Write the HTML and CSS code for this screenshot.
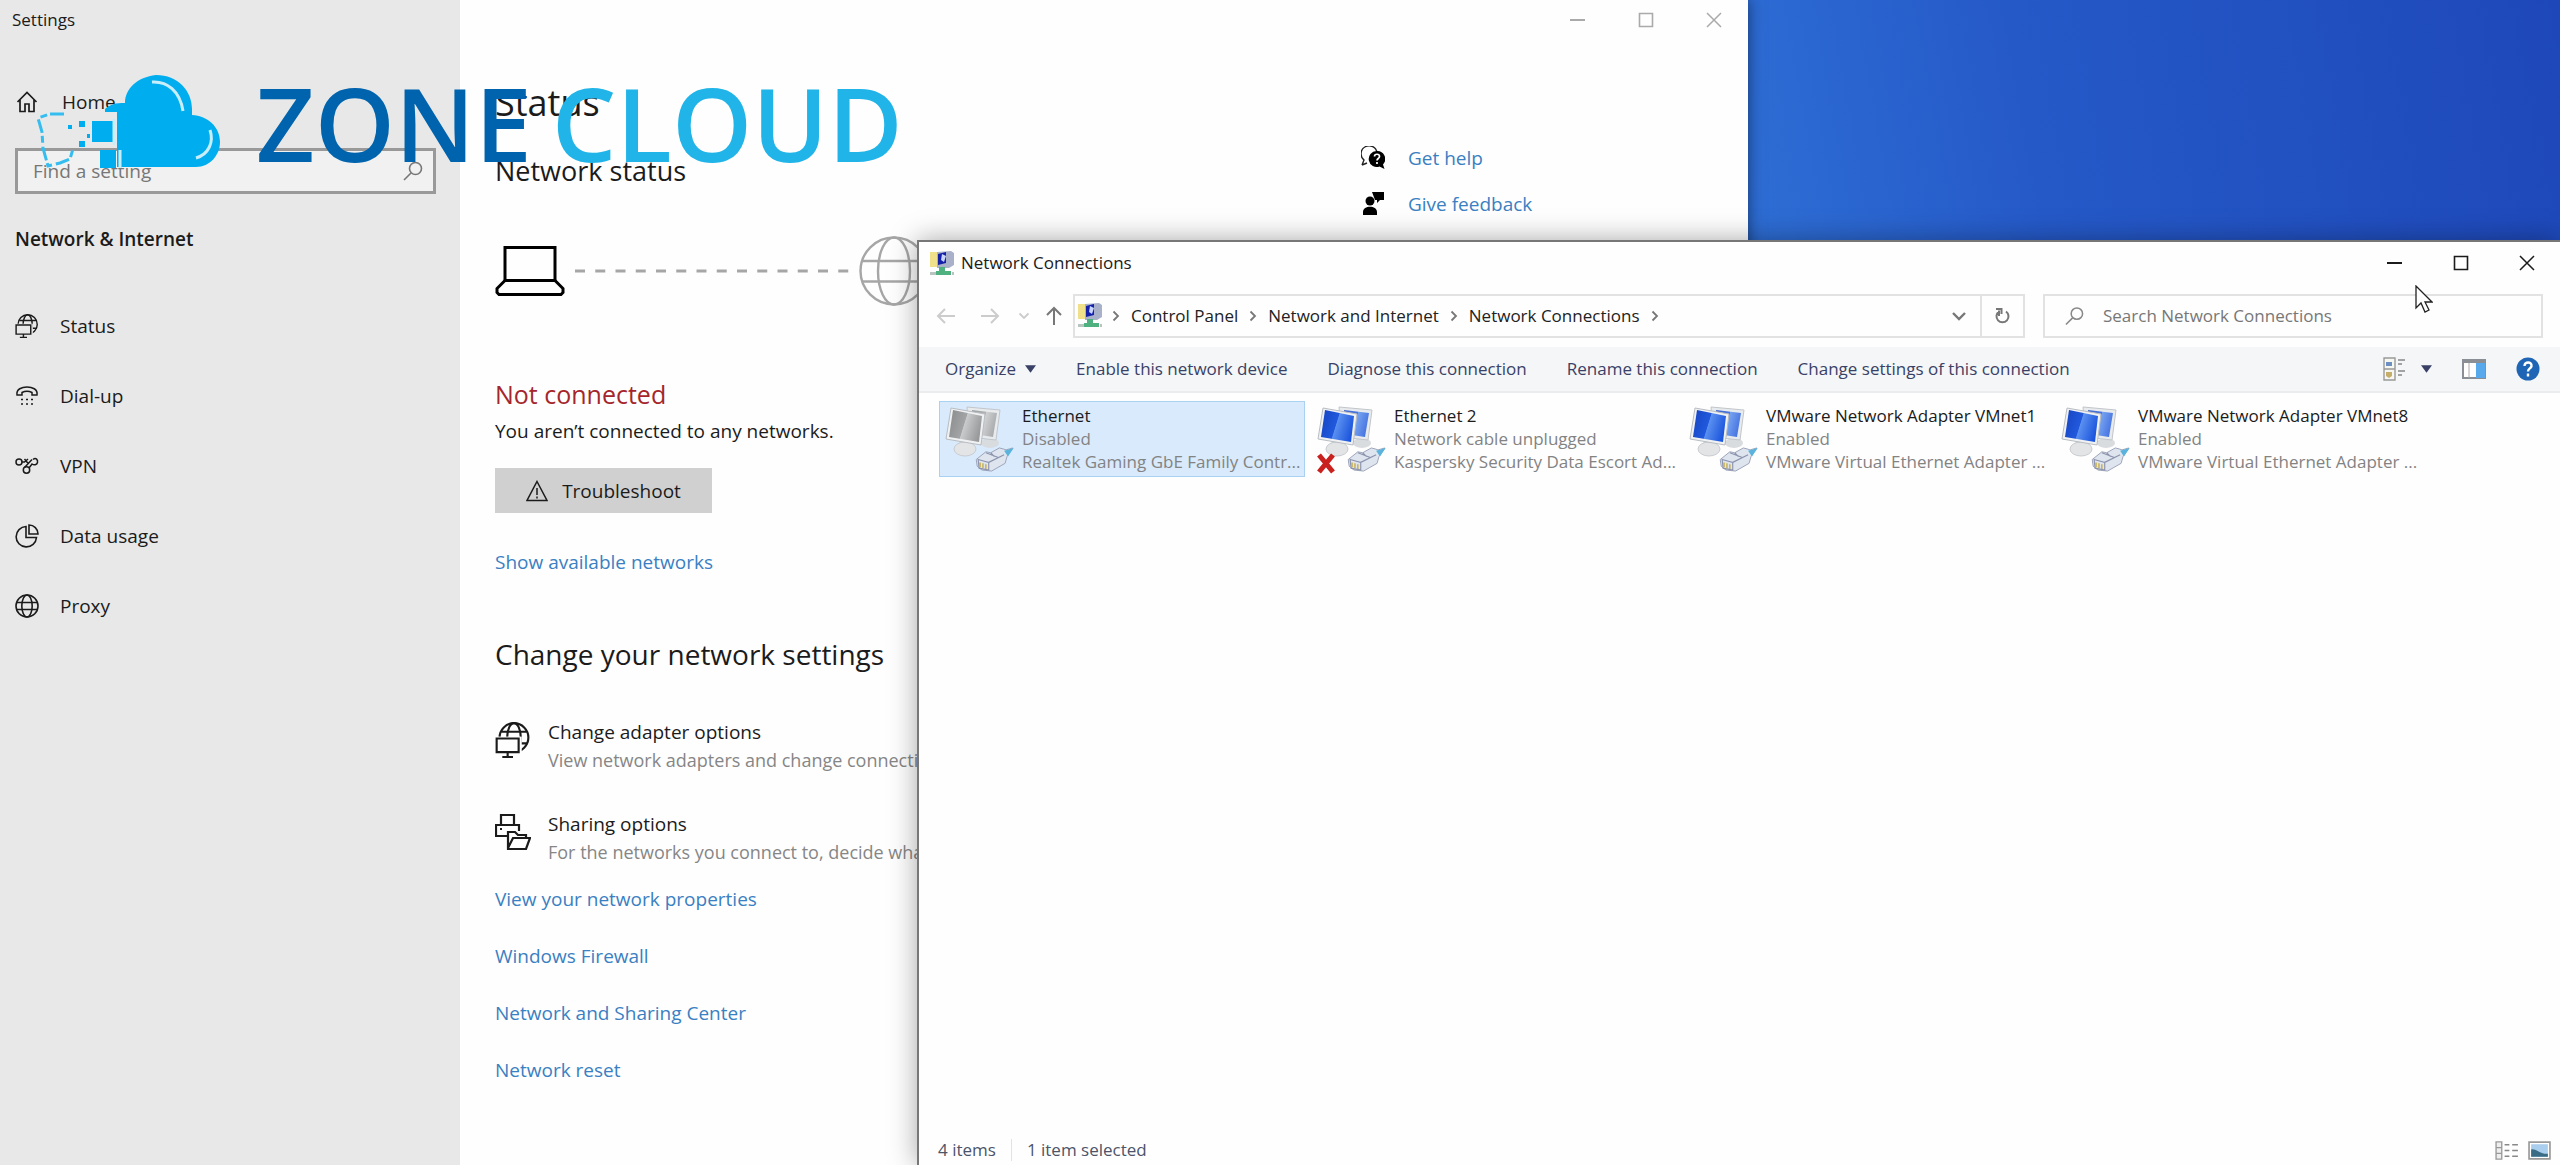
FILE: index.html
```html
<!DOCTYPE html>
<html lang="en">
<head>
<meta charset="utf-8">
<title>Network Connections</title>
<link rel="stylesheet" href="styles.css">
</head>
<body>
<svg class="sprite" aria-hidden="true">
  <defs>
    <linearGradient id="screen-blue" x1="0" y1="0.200" x2="1" y2="0.500">
      <stop offset="0" stop-color="#1746c4"/><stop offset=".48" stop-color="#2159dd"/><stop offset=".5" stop-color="#5a90f0"/><stop offset="1" stop-color="#1c55dd"/>
    </linearGradient>
    <linearGradient id="screen-grey" x1="0" y1="0.200" x2="1" y2="0.500">
      <stop offset="0" stop-color="#8b8d8f"/><stop offset=".48" stop-color="#a2a4a5"/><stop offset=".5" stop-color="#c9cbcc"/><stop offset="1" stop-color="#96989a"/>
    </linearGradient>
  </defs>
  <symbol id="globe" viewBox="0 0 24 24"><g fill="none" stroke="currentColor" stroke-width="1.6"><circle cx="12" cy="12" r="11"/><ellipse cx="12" cy="12" rx="5.2" ry="11"/><path d="M2 8.500h20M2 15.500h20"/></g></symbol>
  <symbol id="globe-pc" viewBox="0 0 36 37"><g fill="none" stroke="currentColor" stroke-width="2.200"><circle cx="19" cy="16" r="14.800"/><ellipse cx="19" cy="16" rx="7" ry="14.800"/><path d="M6 10h26M6 22h27"/></g><path d="M0 15h27v21H0z" fill="var(--bg)"/><path d="M1.200 17h22.600v14H1.200zM12.500 31v5M7 36h11" fill="none" stroke="currentColor" stroke-width="2.200"/></symbol>
  <symbol id="pc-net" viewBox="0 0 24 25"><path d="M0 1h11v15H0z" fill="#f1e08a"/><path d="M7 1l14-1 3 2v12l-5 3H7z" fill="#a9b0c9"/><path d="M8 3l8-2v11l-8 2z" fill="#1420a8"/><path d="M12 3l4 2-2 6-3-2z" fill="#c9d4ff"/><path d="M12 16h3v4h6v4H6v-4h3v-4z" fill="#4fb080"/><path d="M0 21h6v3H0zM22 21h2v3h-2z" fill="#b8c4c0"/></symbol>
  <symbol id="win-min" viewBox="0 0 16 16"><path d="M0 8h15" stroke="currentColor" stroke-width="2"/></symbol>
  <symbol id="win-max" viewBox="0 0 16 16"><path d="M1.500 1.500h13v13h-13z" fill="none" stroke="currentColor" stroke-width="1.600"/></symbol>
  <symbol id="win-close" viewBox="0 0 16 16"><path d="M1 1l14 14M15 1L1 15" stroke="currentColor" stroke-width="1.500"/></symbol>
  <symbol id="search" viewBox="0 0 20 20"><g fill="none" stroke="currentColor" stroke-width="1.600"><circle cx="12.500" cy="7.500" r="6"/><path d="M8 12l-7 7"/></g></symbol>
  <symbol id="arrow" viewBox="0 0 20 18"><path d="M19 9H2M9 2L2 9l7 7" fill="none" stroke="currentColor" stroke-width="2"/></symbol>
  <symbol id="chevron" viewBox="0 0 8 12"><path d="M1.500 1.500L6 6l-4.500 4.500" fill="none" stroke="currentColor" stroke-width="1.800"/></symbol>
  <symbol id="caret" viewBox="0 0 12 8"><path d="M0 0h12L6 8z" fill="currentColor"/></symbol>
  <symbol id="plug" viewBox="0 0 40 26"><path d="M1 13l10-8 5 1 9-5 4 1 3 1 7-2-6 9-2 7-14 8-10-1-5-4z" fill="#dfe5ef" stroke="#9aa2b8"/><path d="M30 4l10-3-6 9z" fill="#59b3dc"/><path d="M3 13l11 3v8l-10-2zM14 16l16-8M16 6l4 4M11 6l13 5" fill="none" stroke="#8c93ad" stroke-width="1.200"/><path d="M5 16v5M8 17v5M11 18v5" stroke="#c6ae4e" stroke-width="1.500"/></symbol>
  <symbol id="monitors" viewBox="0 0 72 70">
    <ellipse cx="46" cy="39" rx="9" ry="5" fill="#d9dcdf"/>
    <path d="M23 3l33 3-4 30-27-3z" fill="#e8ebee" stroke="#c2c6ca"/><path d="M28 6l25 3-4 24-20-3z" fill="var(--screen)" opacity=".8"/>
    <path d="M16 35h10l1 8H15z" fill="#c9cdd1"/><ellipse cx="21" cy="45" rx="11" ry="7" fill="#e2e4e6" stroke="#c9ccd0"/>
    <path d="M7 4l34 6-4 31-35-6z" fill="#eff1f3" stroke="#b9bdc2"/><path d="M9 6l29 6-3 26-30-5z" fill="var(--screen)"/>
    <use href="#plug" x="31" y="43" width="39" height="25"/>
  </symbol>
</svg>

<div class="desktop">
  <section class="settings" aria-label="Settings">
    <aside class="sidebar">
      <div class="app-title">Settings</div>
      <a class="home" href="#"><svg viewBox="0 0 22 22"><path d="M1.500 11L11 1.500 20.500 11M4 9v11.500h5V13h4v7.500h5V9" fill="none" stroke="currentColor" stroke-width="1.700"/></svg>Home</a>
      <label class="find"><input type="text" placeholder="Find a setting" aria-label="Find a setting"><svg><use href="#search"/></svg></label>
      <h2 class="side-title">Network &amp; Internet</h2>
      <nav class="side-nav">
        <a href="#"><svg><use href="#globe-pc"/></svg>Status</a>
        <a href="#"><svg viewBox="0 0 24 24"><path d="M2 11C1 5 7 3 12 3s11 2 10 8h-5V8.500c-3-1.500-7-1.500-10 0V11z" fill="none" stroke="currentColor" stroke-width="1.500"/><path d="M6 15.500h2m3 0h2m3 0h2M6 20h2m3 0h2m3 0h2" stroke="currentColor" stroke-width="1.600"/></svg>Dial-up</a>
        <a href="#"><svg viewBox="0 0 24 24"><g fill="none" stroke="currentColor" stroke-width="1.500"><circle cx="4" cy="8" r="3"/><path d="M7 8h2.500l3.500-3M9.500 5l4 5M18 5.500C21 3 23 6 22.500 8.500S19 11.500 17 10L14 14M17 5.500L9.500 13.500"/><circle cx="11.500" cy="16" r="3.200"/></g></svg>VPN</a>
        <a href="#"><svg viewBox="0 0 24 24"><g fill="none" stroke="currentColor" stroke-width="1.600"><path d="M11 2.500a10.200 10.200 0 1 0 10.500 11H11z"/><path d="M14 1v9h9A9 9 0 0 0 14 1z"/></g></svg>Data usage</a>
        <a href="#"><svg><use href="#globe"/></svg>Proxy</a>
      </nav>
    </aside>
    <main class="main">
      <div class="caption pale">
        <button aria-label="Minimize"><svg><use href="#win-min"/></svg></button>
        <button aria-label="Maximize"><svg><use href="#win-max"/></svg></button>
        <button aria-label="Close"><svg><use href="#win-close"/></svg></button>
      </div>
      <div class="columns">
        <div class="content">
          <h1>Status</h1>
          <h2 class="sub">Network status</h2>
          <div class="diagram">
            <svg class="laptop" viewBox="0 0 70 50"><g fill="none" stroke="#000" stroke-width="3"><path d="M10 1.500h50v33H10z"/><path d="M10 34.500L2 42.500v4l2 2h62l2-2v-4l-8-8"/></g></svg>
            <svg class="dashes" viewBox="0 0 274 4"><path d="M0 2h274" stroke="#a6a6a6" stroke-width="3" stroke-dasharray="10 10.250"/></svg>
            <svg class="world" viewBox="0 0 70 70"><g fill="none" stroke="#a6a6a6" stroke-width="2.400"><circle cx="35" cy="35" r="33.500"/><ellipse cx="35" cy="35" rx="16" ry="33.500"/><path d="M3 25h64M3 45.500h64"/></g></svg>
          </div>
          <p class="alert">Not connected</p>
          <p class="body">You aren’t connected to any networks.</p>
          <button class="trouble"><svg viewBox="0 0 22 22"><path d="M11 1.500L21 20.500H1z" fill="none" stroke="currentColor" stroke-width="1.500"/><path d="M11 8v7M11 16.500v2" stroke="currentColor" stroke-width="1.500"/></svg>Troubleshoot</button>
          <a class="body show" href="#">Show available networks</a>
          <h2 class="change">Change your network settings</h2>
          <div class="options">
            <a class="option" href="#"><svg><use href="#globe-pc"/></svg><span><b>Change adapter options</b><small>View network adapters and change connection settings.</small></span></a>
            <a class="option" href="#"><svg viewBox="0 0 36 36"><g fill="none" stroke="currentColor" stroke-width="2.200"><path d="M6 11V1h13v10M12 22H1V11h23v6M5 15h2"/><path d="M13 34V18h7l3 3h8v4M13 34l5-10h17l-4 11H13z"/></g></svg><span><b>Sharing options</b><small>For the networks you connect to, decide what you want to share.</small></span></a>
          </div>
          <nav class="links">
            <a href="#">View your network properties</a>
            <a href="#">Windows Firewall</a>
            <a href="#">Network and Sharing Center</a>
            <a href="#">Network reset</a>
          </nav>
        </div>
        <aside class="help">
          <a href="#"><svg viewBox="0 0 24 24"><path d="M1 19l2-5A8 8 0 1 1 16 7M1 19l5-2" fill="none" stroke="#222" stroke-width="1.400"/><path d="M15.500 5a8 8 0 1 0 3 15.500l5 2.500-1.500-4.500A8 8 0 0 0 15.500 5z" fill="#000"/><path d="M13.500 10.500c0-3 5-3 5 0 0 2-2.500 2-2.500 4M16 16v2" fill="none" stroke="#fff" stroke-width="1.700"/></svg>Get help</a>
          <a href="#"><svg viewBox="0 0 24 24"><circle cx="9" cy="9" r="4.500"/><path d="M2 23v-3c0-7 14-7 14 0v3zM11 0h12v8h-4l-3 3V8h-2z"/></svg>Give feedback</a>
        </aside>
      </div>
    </main>
  </section>

  <section class="explorer" aria-label="Network Connections">
    <header class="ex-title">
      <svg class="app"><use href="#pc-net"/></svg><span>Network Connections</span>
      <div class="caption">
        <button aria-label="Minimize"><svg><use href="#win-min"/></svg></button>
        <button aria-label="Maximize"><svg><use href="#win-max"/></svg></button>
        <button aria-label="Close"><svg><use href="#win-close"/></svg></button>
      </div>
    </header>
    <div class="ex-nav">
      <div class="history">
        <button class="off" aria-label="Back"><svg><use href="#arrow"/></svg></button>
        <button class="off" aria-label="Forward"><svg class="flip"><use href="#arrow"/></svg></button>
        <button class="off small" aria-label="Recent"><svg class="down"><use href="#chevron"/></svg></button>
        <button aria-label="Up"><svg class="up"><use href="#arrow"/></svg></button>
      </div>
      <div class="address">
        <svg class="app"><use href="#pc-net"/></svg>
        <svg class="sep"><use href="#chevron"/></svg><a href="#">Control Panel</a>
        <svg class="sep"><use href="#chevron"/></svg><a href="#">Network and Internet</a>
        <svg class="sep"><use href="#chevron"/></svg><a href="#">Network Connections</a>
        <svg class="sep"><use href="#chevron"/></svg>
        <button class="drop" aria-label="Previous locations"><svg viewBox="0 0 14 10"><path d="M1 2l6 6 6-6" fill="none" stroke="currentColor" stroke-width="2.400"/></svg></button>
        <button class="refresh" aria-label="Refresh"><svg viewBox="0 0 16 18"><path d="M4 4.500a6 6 0 1 0 7 0M4 9V3.500M1 2h5.500v5" fill="none" stroke="currentColor" stroke-width="2"/></svg></button>
      </div>
      <label class="ex-search"><svg><use href="#search"/></svg><input type="text" placeholder="Search Network Connections" aria-label="Search Network Connections"></label>
    </div>
    <div class="toolbar">
      <button>Organize <svg class="caret"><use href="#caret"/></svg></button>
      <button>Enable this network device</button>
      <button>Diagnose this connection</button>
      <button>Rename this connection</button>
      <button>Change settings of this connection</button>
      <div class="tools">
        <button aria-label="Change your view"><svg class="view" viewBox="0 0 22 24"><path d="M1 1h11v22H1zM1 12h11" fill="#f7f7f2" stroke="#999" stroke-width="1.400"/><path d="M3 5h6v4H3z" fill="#6b8fc0"/><path d="M3 15h6v4l-3 2-3-2z" fill="#c6ad6a"/><path d="M15 3h7M15 7h4M15 14h7M15 18h4" stroke="#888" stroke-width="1.600"/></svg><svg class="caret"><use href="#caret"/></svg></button>
        <button aria-label="Preview pane"><svg class="pane" viewBox="0 0 24 20"><path d="M1 1h22v18H1z" fill="#fff" stroke="#8a8f96" stroke-width="2"/><path d="M1 0h22v4H1z" fill="#8a8f96"/><path d="M14 4h9v15h-9z" fill="#58a8ec"/><path d="M7 4v15" stroke="#aaa"/></svg></button>
        <button aria-label="Help"><svg class="ask" viewBox="0 0 24 24"><circle cx="12" cy="12" r="11.500" fill="#1f65b5"/><path d="M8.500 9c0-5 7.500-4.500 7 0-.3 2.500-3.500 2.500-3.500 5.500M12 16.500v3" fill="none" stroke="#fff" stroke-width="2.400"/></svg></button>
      </div>
    </div>
    <ul class="adapters">
      <li class="selected"><svg class="grey"><use href="#monitors"/></svg><span><b>Ethernet</b><span>Disabled</span><span>Realtek Gaming GbE Family Contr...</span></span></li>
      <li><svg><use href="#monitors"/></svg><svg class="cross" viewBox="0 0 20 21"><path d="M3 2l14 17M17 2L3 19" stroke="#c9211e" stroke-width="5"/></svg><span><b>Ethernet 2</b><span>Network cable unplugged</span><span>Kaspersky Security Data Escort Ad...</span></span></li>
      <li><svg><use href="#monitors"/></svg><span><b>VMware Network Adapter VMnet1</b><span>Enabled</span><span>VMware Virtual Ethernet Adapter ...</span></span></li>
      <li><svg><use href="#monitors"/></svg><span><b>VMware Network Adapter VMnet8</b><span>Enabled</span><span>VMware Virtual Ethernet Adapter ...</span></span></li>
    </ul>
    <footer class="status">
      <span>4 items</span><i></i><span>1 item selected</span>
      <div class="modes">
        <button aria-label="Details"><svg viewBox="0 0 24 20"><path d="M1 1h6v18H1zM1 7h6M1 13h6" fill="#eee" stroke="#999" stroke-width="1.400"/><path d="M10 4h5M18 4h6M10 10h5M18 10h6M10 16h5M18 16h6" stroke="#888" stroke-width="1.600"/></svg></button>
        <button aria-label="Large icons"><svg viewBox="0 0 22 18"><path d="M1 1h20v16H1z" fill="#fff" stroke="#999" stroke-width="1.600"/><path d="M3 3h16v12H3z" fill="#a9cdec"/><path d="M3 8c6-1 8 5 16 4v3H3z" fill="#3a6c86"/></svg></button>
      </div>
    </footer>
  </section>

  <div class="brand">
    <svg viewBox="0 0 190 96" fill="#00aeef">
      <path d="M71 35c6-5 10-6 20-6 0-14 12-26 31-28 22 0 36 16 36 34v6c16 1 28 12 28 27 0 13-10 25-24 25H83V38H71z"/>
      <path d="M118 8c15-1 28 9 31 29M176 56c4 12-1 24-14 28" fill="none" stroke="#c9eefb" stroke-width="3"/>
      <path d="M58 47h21v21H58zM66 76h16v18H66zM34 51h4v4h-4zM45 47h6v6h-6zM45 67h6v6h-6zM53 60h3v4h-3z"/>
      <path d="M30 40h-14l-12 4 4 14 1 16 5 18 12-3 10-4 3-10" fill="none" stroke="#35bdf0" stroke-width="3" stroke-dasharray="14 3 7 4"/>
      <path d="M80 45v26M86 76v18" stroke="#c9eefb" stroke-width="3"/>
    </svg>
    <span class="zone">ZONE</span><span class="cloud">CLOUD</span>
  </div>
  <svg class="cursor" viewBox="0 0 18 28"><path d="M1 1v22l5-5 4 9 4-2-4-8h7z" fill="#fff" stroke="#222" stroke-width="1.300"/></svg>
</div>
</body>
</html>
```
FILE: styles.css
```css
* { box-sizing: border-box; }
body { margin: 0; font-family: "Open Sans", "Noto Sans", sans-serif; font-size: 19px; line-height: 28px; color: #1b1b1b; }
h1, h2, p, ul { margin: 0; padding: 0; font-weight: 400; }
b, small { display: block; font-size: inherit; font-weight: 400; }
a { color: inherit; text-decoration: none; }
button { border: 0; padding: 0; background: none; font: inherit; color: inherit; }
input { border: 0; padding: 0; outline: 0; background: none; font: inherit; color: inherit; min-width: 0; flex: 1; }
svg { flex: none; display: block; }
.sprite { position: absolute; width: 0; height: 0; }

.desktop { position: relative; min-height: 100vh; overflow: hidden; background: linear-gradient(80deg, #2f70d6 68%, #2559c8 80%, #1e48ba 100%); }

/* Settings window */
.settings { position: absolute; inset: 0 auto 0 0; width: 1748px; display: flex; background: #fefefe; box-shadow: 0 0 14px rgba(0, 0, 0, .5); --bg: #fefefe; }
.sidebar { width: 460px; flex: none; background: #e8e8e8; --bg: #e8e8e8; }
.app-title { padding: 6px 12px; font-size: 17px; }
.home { display: flex; align-items: center; gap: 24px; height: 44px; margin-top: 40px; padding-left: 16px; }
.home svg { width: 22px; height: 22px; }
.find { display: flex; align-items: center; height: 46px; margin: 24px 24px 0 15px; padding: 0 10px 0 15px; border: 3px solid #999; background: #f1f1f1; color: #777; }
.find svg { width: 20px; height: 20px; }
input::placeholder { color: #777; opacity: 1; }
.side-title { margin: 29px 0 36px 15px; font-size: 19px; line-height: 32px; font-weight: 600; }
.side-nav a { display: flex; align-items: center; gap: 21px; height: 70px; padding-left: 15px; }
.side-nav svg { width: 24px; height: 24px; }

.main { flex: 1; min-width: 0; }
.caption { display: flex; justify-content: flex-end; margin-left: auto; }
.caption button { width: 66px; height: 40px; display: grid; place-items: center; }
.caption svg { width: 16px; height: 16px; }
.pale { color: #aaa; }
.pale button { width: 68px; }
.columns { display: flex; }
.content { flex: 1; padding: 38px 0 0 35px; white-space: nowrap; min-width: 0; }
h1 { font-size: 36px; line-height: 50px; }
.sub { margin-top: 26px; font-size: 27px; line-height: 34px; }
.diagram { display: flex; align-items: center; margin-top: 48px; height: 70px; gap: 10px; }
.laptop { width: 70px; height: 50px; }
.dashes { width: 274px; height: 4px; }
.world { width: 70px; height: 70px; }
.alert { margin-top: 71px; font-size: 25px; line-height: 34px; color: #a4262c; }
.body { display: block; line-height: 30px; margin-top: 5px; }
.trouble { display: flex; align-items: center; justify-content: center; gap: 14px; width: 217px; height: 45px; margin-top: 22px; background: #d0d0d0; }
.trouble svg { width: 22px; height: 22px; }
.show { margin-top: 34px; color: #3a80c2; }
.change { margin-top: 58px; font-size: 28px; line-height: 38px; }
.options { display: grid; gap: 36px; margin-top: 45px; }
.option { display: flex; gap: 17px; align-items: flex-start; }
.option svg { width: 36px; height: 36px; margin-top: 4px; }
.option small { font-size: 18px; color: #868686; }
.links { margin-top: 5px; color: #3a80c2; }
.links a { display: block; line-height: 57px; }
.help { width: 387px; flex: none; padding-top: 95px; color: #3a80c2; }
.help a { display: flex; align-items: center; gap: 23px; line-height: 46px; }
.help svg { width: 24px; height: 24px; fill: #000; }

/* Network Connections window */
.explorer { position: absolute; inset: 240px 0 0 917px; display: flex; flex-direction: column; background: #fefefe; border: solid #777; border-width: 2px 0 0 2px; box-shadow: 0 0 26px rgba(0, 0, 0, .35); font-size: 17px; }
.ex-title { display: flex; align-items: center; height: 42px; padding-left: 11px; }
.app { width: 24px; height: 25px; margin-right: 7px; }
.ex-nav { display: flex; align-items: center; height: 63px; padding-right: 17px; }
.history { display: flex; align-items: center; width: 154px; flex: none; padding-left: 17px; gap: 24px; color: #777; }
.history svg { width: 20px; height: 18px; }
.history .off { color: #ccc; }
.history .small svg { width: 8px; height: 12px; }
.history .small { margin: 0 -8px 0 -4px; }
.flip { transform: rotate(180deg); }
.down, .up { transform: rotate(90deg); }
.address, .ex-search { display: flex; align-items: center; height: 44px; border: 2px solid #e2e2e2; }
.address { flex: 1; padding-left: 3px; color: #222; }
.sep { width: 8px; height: 12px; margin: 0 11px; color: #777; }
.address .app { margin-right: -1px; }
.drop { margin-left: auto; padding: 0 14px; }
.drop, .refresh { height: 100%; color: #777; }
.drop svg { width: 14px; height: 10px; }
.refresh { display: grid; place-items: center; width: 43px; border-left: 2px solid #e2e2e2; }
.refresh svg { width: 16px; height: 18px; }
.ex-search { width: 500px; margin-left: 18px; padding-left: 20px; gap: 19px; color: #888; }
.ex-search svg { width: 19px; height: 20px; }
.toolbar { display: flex; align-items: center; gap: 40px; height: 46px; padding: 0 20px 0 26px; background: #f4f6f7; border-bottom: 2px solid #ebeced; color: #3a4166; white-space: nowrap; }
.toolbar button { display: flex; align-items: center; gap: 9px; }
.caret { width: 11px; height: 8px; }
.tools { display: flex; align-items: center; gap: 30px; margin-left: auto; }
.view { width: 22px; height: 24px; margin-right: 7px; }
.pane { width: 24px; height: 20px; }
.ask { width: 24px; height: 24px; }
.adapters { flex: 1; display: grid; grid-template-columns: repeat(4, 366px); align-content: start; gap: 6px; padding: 8px 0 0 20px; list-style: none; white-space: nowrap; }
.adapters li { position: relative; display: flex; gap: 6px; height: 76px; padding: 2px 4px; border: 1px solid transparent; line-height: 23px; color: #838383; --screen: url(#screen-blue); }
.adapters li > svg { width: 72px; height: 70px; }
.adapters .grey { --screen: url(#screen-grey); }
.adapters li > .cross { position: absolute; left: 4px; bottom: 2px; width: 20px; height: 21px; }
.adapters span span { display: block; }
.adapters b { color: #1b1b1b; }
.adapters .selected { background: #d8eafb; border-color: #a9d1f2; }
.status { display: flex; align-items: center; height: 30px; padding: 0 9px 0 19px; color: #4b5468; }
.status i { width: 1px; height: 22px; margin: 0 15px; background: #e2e2e2; }
.modes { display: flex; gap: 10px; margin-left: auto; }
.modes svg { width: 23px; height: 19px; }

/* Overlays */
.brand { position: absolute; left: 34px; top: 74px; display: flex; align-items: flex-start; font-size: 102px; line-height: 98px; font-weight: 600; }
.brand svg { width: 190px; height: 96px; margin-right: 32px; }
.zone { color: #0063ad; }
.cloud { color: #20b4e8; margin-left: 20px; }
.cursor { position: absolute; left: 2415px; top: 285px; width: 18px; height: 28px; }
```
